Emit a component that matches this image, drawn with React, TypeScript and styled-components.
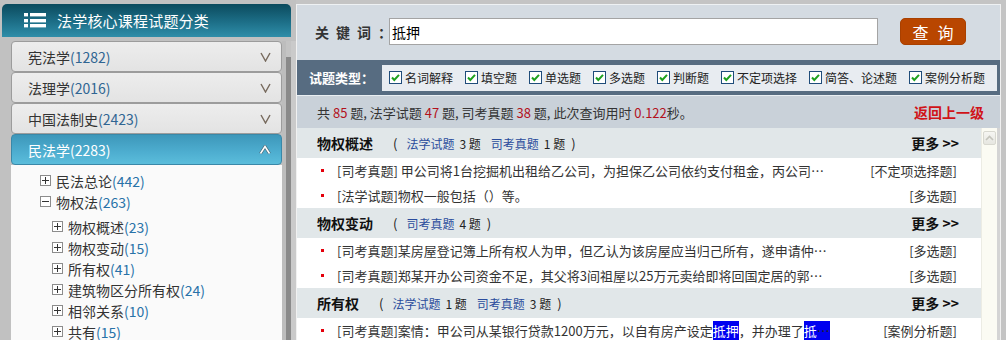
import React from "react";
import styled, { createGlobalStyle } from "styled-components";

const Global = createGlobalStyle`
  html, body { margin: 0; padding: 0; background: #c4c4c4; }
  body { font-family: "Noto Sans CJK SC", "Noto Sans", sans-serif; }
  #root { width: 1006px; height: 340px; overflow: hidden; }
  * { box-sizing: border-box; }
`;

const Page = styled.div`
  display: flex;
  width: 1006px;
  height: 340px;
  overflow: hidden;
  background: #c4c4c4;
`;

/* ---------- left panel ---------- */
const LeftPanel = styled.div`
  width: 296px;
  flex: none;
  display: flex;
  flex-direction: column;
  background: #c1c1c1;
`;

const SideHeader = styled.div`
  margin: 4px 5px 0 2px;
  height: 33px;
  flex: none;
  border-radius: 5px 5px 0 0;
  background: linear-gradient(#0b4a5d, #1d6f88 55%, #2f8ea9);
  display: flex;
  align-items: center;
  padding-left: 22px;
  gap: 11px;
  color: #fff;
  font-size: 15px;
  letter-spacing: 0.2px;
`;

const SideBody = styled.div`
  flex: 1;
  min-height: 0;
  display: flex;
  margin-top: 4px;
  padding-left: 11px;
`;

const AccordionCol = styled.div`
  width: 271px;
  display: flex;
  flex-direction: column;
`;

const AccItem = styled.div<{ $active?: boolean }>`
  height: 31px;
  flex: none;
  border: 1px solid ${(p) => (p.$active ? "#3a88a8" : "#9c9c9c")};
  border-radius: 4px;
  background: ${(p) =>
    p.$active
      ? "linear-gradient(#3d97ba, #4eaed0 60%, #5bbddb)"
      : "linear-gradient(#ededed, #e3e3e3)"};
  display: flex;
  align-items: center;
  justify-content: space-between;
  padding: 0 10px 0 16px;
  font-size: 14px;
  color: ${(p) => (p.$active ? "#fff" : "#333")};
`;

const AccCount = styled.span<{ $active?: boolean }>`
  color: ${(p) => (p.$active ? "#fff" : "#2f6592")};
`;

const TreeWrap = styled.div`
  flex: 1;
  background: #fafafa;
  padding: 5px 0 0 29px;
  overflow: hidden;
`;

const TreeRow = styled.div<{ $level: number }>`
  height: 21px;
  display: flex;
  align-items: center;
  padding-left: ${(p) => p.$level * 12}px;
  font-size: 14px;
  color: #333;
  white-space: nowrap;
`;

const TreeCount = styled.span`
  color: #2872a8;
`;

const ToggleBox = styled.span`
  width: 11px;
  height: 11px;
  flex: none;
  border: 1px solid #8c8c8c;
  background: #fff;
  margin-right: 5px;
  display: flex;
  align-items: center;
  justify-content: center;
`;

const ChildGroup = styled.div`
  margin-top: 4px;
`;

const ScrollStrip = styled.div`
  width: 14px;
  flex: none;
  display: flex;
  background: linear-gradient(90deg, #bdbdbd 0 4px, #c4c4c4 4px 9px, #cacaca 9px);
`;

const StripThumb = styled.div`
  margin: 16px 0 0 4px;
  width: 5px;
  background: #8a8a8a;
`;

/* ---------- right panel ---------- */
const RightPanel = styled.div`
  width: 705px;
  flex: none;
  margin-top: 4px;
  border-top: 1px solid #eef1f3;
  border-left: 1px solid #f1f1f1;
  border-right: 1px solid #f0f0f0;
  display: flex;
  flex-direction: column;
  background: #d4dbe2;
`;

const SearchBar = styled.div`
  height: 55px;
  flex: none;
  display: flex;
  align-items: flex-start;
  padding: 13px 0 0 18px;
  background: #d4dbe2;
`;

const KeyLabel = styled.label`
  width: 74px;
  height: 27px;
  display: flex;
  align-items: center;
  font-size: 14px;
  font-weight: bold;
  color: #333;
  white-space: nowrap;
`;

const Spaced = styled.span`
  letter-spacing: 7px;
`;

const KeyInput = styled.input`
  width: 489px;
  height: 27px;
  border: 1px solid #a4a4a4;
  background: #fff;
  padding: 0 2px;
  font-family: "Noto Sans CJK SC", sans-serif;
  font-size: 14px;
  color: #000;
  outline: none;
`;

const SearchBtn = styled.button`
  margin-left: 22px;
  width: 66px;
  height: 27px;
  border: 1px solid #a94000;
  border-radius: 5px;
  background: #b94600;
  color: #fff;
  font-family: "Noto Sans CJK SC", sans-serif;
  font-size: 16px;
  letter-spacing: 9px;
  padding: 0 0 0 9px;
  cursor: pointer;
`;

const TypeRow = styled.div`
  height: 35px;
  flex: none;
  display: flex;
  align-items: center;
  padding-left: 12px;
  background: #576c81;
`;

const TypeLabel = styled.span`
  width: 73px;
  flex: none;
  color: #fff;
  font-weight: bold;
  font-size: 13px;
  white-space: nowrap;
`;

const TypeBox = styled.div`
  flex: 1;
  height: 26px;
  margin: 0 5px 0 0;
  background: #e8ecf1;
  display: flex;
  align-items: center;
  padding-left: 7px;
`;

const Check = styled.label`
  display: flex;
  align-items: center;
  gap: 3px;
  margin-right: 12px;
  font-size: 12px;
  color: #222;
  white-space: nowrap;
`;

const StatsRow = styled.div`
  height: 33px;
  flex: none;
  border-top: 1px solid #e9eef2;
  background: #c9d1d9;
  display: flex;
  align-items: center;
  justify-content: space-between;
  padding: 0 16px 0 20px;
  font-size: 13px;
  color: #333;
`;

const Num = styled.span`
  color: #b3111c;
`;

const BackLink = styled.a`
  color: #d01318;
  font-weight: bold;
  font-size: 14px;
  text-decoration: none;
`;

const ContentArea = styled.div`
  flex: 1;
  min-height: 0;
  display: flex;
  background: #d4d4d4;
`;

const List = styled.div`
  flex: 1;
  background: #fff;
  overflow: hidden;
`;

const VScroll = styled.div`
  width: 16px;
  flex: none;
  margin-right: 3px;
  background: #fbfbf3;
  border-left: 1px solid #ecece4;
  padding: 3px 1px 0 1px;
`;

const ScrollUp = styled.div`
  height: 14px;
  border: 1px solid #d8d8d0;
  border-radius: 2px;
  background: linear-gradient(#f6f6f2, #e6e6e0);
  display: flex;
  align-items: center;
  justify-content: center;
`;

const SectionHead = styled.div`
  height: 30px;
  background: #e1e7e9;
  display: flex;
  align-items: center;
  padding: 0 22px 0 20px;
  white-space: nowrap;
`;

const SectionTitle = styled.span`
  font-size: 14px;
  font-weight: bold;
  color: #111;
`;

const SectionSub = styled.span`
  margin-left: 20px;
  font-size: 12px;
  color: #222;
`;

const Paren = styled.span<{ $side: "l" | "r" }>`
  font-size: 13px;
  ${(p) => (p.$side === "l" ? "margin-right: 9px;" : "margin-left: 6px;")}
`;

const SubLink = styled.a`
  color: #2a4c9c;
  text-decoration: none;
`;

const SubCount = styled.span<{ $gap?: boolean }>`
  margin-left: 5px;
  margin-right: ${(p) => (p.$gap ? "10px" : "0")};
`;

const More = styled.a`
  margin-left: auto;
  font-size: 14px;
  font-weight: bold;
  color: #111;
  text-decoration: none;
`;

const ItemRow = styled.div`
  height: 25px;
  display: flex;
  align-items: center;
  padding: 0 24px 0 24px;
  font-size: 13px;
  color: #333;
  white-space: nowrap;
`;

const Bullet = styled.span`
  width: 3px;
  height: 3px;
  flex: none;
  background: #e4000b;
  margin-right: 13px;
`;

const ItemText = styled.span`
  flex: 1;
  overflow: hidden;
`;

const ItemTag = styled.span`
  flex: none;
  margin-left: 12px;
`;

const Hl = styled.span<{ $dim?: boolean }>`
  background: #0000f0;
  color: ${(p) => (p.$dim ? "#222" : "#fff")};
`;

/* ---------- small drawings ---------- */
const ListIcon = () => (
  <svg width="22" height="15" viewBox="0 0 22 15">
    {[0, 6, 11].map((y) => (
      <g key={y} fill="#fff">
        <rect x="0" y={y} width="4" height="3.4" />
        <rect x="6" y={y} width="16" height="3.4" />
      </g>
    ))}
  </svg>
);

const Chevron = ({ up }: { up?: boolean }) =>
  up ? (
    <svg width="12" height="10" viewBox="0 0 12 10">
      <polyline points="1.5,8.5 6,1.5 10.5,8.5" fill="none" stroke="#4a6a78" strokeWidth="3" />
      <polyline points="1.5,8.5 6,1.5 10.5,8.5" fill="none" stroke="#fff" strokeWidth="1.5" />
    </svg>
  ) : (
    <svg width="11" height="10" viewBox="0 0 11 10">
      <polyline points="1,1 5.5,9 10,1" fill="none" stroke="#76695c" strokeWidth="1.4" />
    </svg>
  );

const PlusMinus = ({ minus }: { minus?: boolean }) => (
  <svg width="9" height="9" viewBox="0 0 9 9">
    <rect x="1" y="4" width="7" height="1" fill="#333" />
    {!minus && <rect x="4" y="1" width="1" height="7" fill="#333" />}
  </svg>
);

const CheckBox = () => (
  <svg width="13" height="13" viewBox="0 0 13 13">
    <rect x="0.5" y="0.5" width="12" height="12" fill="#fff" stroke="#1f4c7a" />
    <polyline points="3,6.5 5.3,9 10,3.8" fill="none" stroke="#1ea11e" strokeWidth="2" />
  </svg>
);

/* ---------- data ---------- */
const subjects = [
  { name: "宪法学", count: 1282 },
  { name: "法理学", count: 2016 },
  { name: "中国法制史", count: 2423 },
  { name: "民法学", count: 2283, active: true },
];

const children = [
  ["物权概述", 23],
  ["物权变动", 15],
  ["所有权", 41],
  ["建筑物区分所有权", 24],
  ["相邻关系", 10],
  ["共有", 15],
] as const;

const types = ["名词解释", "填空题", "单选题", "多选题", "判断题", "不定项选择", "简答、论述题", "案例分析题"];

type Item = { text: React.ReactNode; tag: string };
type Section = { title: string; fx?: number; sk?: number; items: Item[] };

const sections: Section[] = [
  {
    title: "物权概述",
    fx: 3,
    sk: 1,
    items: [
      { text: "[司考真题] 甲公司将1台挖掘机出租给乙公司，为担保乙公司依约支付租金，丙公司…", tag: "[不定项选择题]" },
      { text: "[法学试题]物权一般包括（）等。", tag: "[多选题]" },
    ],
  },
  {
    title: "物权变动",
    sk: 4,
    items: [
      { text: "[司考真题]某房屋登记簿上所有权人为甲，但乙认为该房屋应当归己所有，遂申请仲…", tag: "[多选题]" },
      { text: "[司考真题]郑某开办公司资金不足，其父将3间祖屋以25万元卖给即将回国定居的郭…", tag: "[多选题]" },
    ],
  },
  {
    title: "所有权",
    fx: 1,
    sk: 3,
    items: [
      {
        text: (
          <>
            [司考真题]案情：甲公司从某银行贷款1200万元，以自有房产设定<Hl>抵押</Hl>，并办理了<Hl>抵</Hl>
            <Hl $dim>…</Hl>
          </>
        ),
        tag: "[案例分析题]",
      },
    ],
  },
];

export default function App() {
  return (
    <>
      <Global />
      <Page>
        <LeftPanel>
          <SideHeader>
            <ListIcon />
            <span>法学核心课程试题分类</span>
          </SideHeader>
          <SideBody>
            <AccordionCol>
              {subjects.map((s) => (
                <AccItem key={s.name} $active={s.active}>
                  <span>
                    {s.name}
                    <AccCount $active={s.active}>({s.count})</AccCount>
                  </span>
                  <Chevron up={s.active} />
                </AccItem>
              ))}
              <TreeWrap>
                <TreeRow $level={0}>
                  <ToggleBox><PlusMinus /></ToggleBox>
                  民法总论<TreeCount>(442)</TreeCount>
                </TreeRow>
                <TreeRow $level={0}>
                  <ToggleBox><PlusMinus minus /></ToggleBox>
                  物权法<TreeCount>(263)</TreeCount>
                </TreeRow>
                <ChildGroup>
                  {children.map(([n, c]) => (
                    <TreeRow key={n} $level={1}>
                      <ToggleBox><PlusMinus /></ToggleBox>
                      {n}<TreeCount>({c})</TreeCount>
                    </TreeRow>
                  ))}
                </ChildGroup>
              </TreeWrap>
            </AccordionCol>
            <ScrollStrip>
              <StripThumb />
            </ScrollStrip>
          </SideBody>
        </LeftPanel>

        <RightPanel>
          <SearchBar>
            <KeyLabel>
              <Spaced>关键词</Spaced>：
            </KeyLabel>
            <KeyInput defaultValue="抵押" />
            <SearchBtn>查询</SearchBtn>
          </SearchBar>

          <TypeRow>
            <TypeLabel>试题类型：</TypeLabel>
            <TypeBox>
              {types.map((t) => (
                <Check key={t}>
                  <CheckBox />
                  {t}
                </Check>
              ))}
            </TypeBox>
          </TypeRow>

          <StatsRow>
            <span>
              共 <Num>85</Num> 题, 法学试题 <Num>47</Num> 题, 司考真题 <Num>38</Num> 题, 此次查询用时 <Num>0.122</Num>秒。
            </span>
            <BackLink href="#">返回上一级</BackLink>
          </StatsRow>

          <ContentArea>
            <List>
              {sections.map((sec) => (
                <div key={sec.title}>
                  <SectionHead>
                    <SectionTitle>{sec.title}</SectionTitle>
                    <SectionSub>
                      <Paren $side="l">(</Paren>
                      {sec.fx !== undefined && (
                        <>
                          <SubLink href="#">法学试题</SubLink>
                          <SubCount $gap>{sec.fx} 题</SubCount>
                        </>
                      )}
                      <SubLink href="#">司考真题</SubLink>
                      <SubCount>{sec.sk} 题</SubCount>
                      <Paren $side="r">)</Paren>
                    </SectionSub>
                    <More href="#">更多 &gt;&gt;</More>
                  </SectionHead>
                  {sec.items.map((it, i) => (
                    <ItemRow key={i}>
                      <Bullet />
                      <ItemText>{it.text}</ItemText>
                      <ItemTag>{it.tag}</ItemTag>
                    </ItemRow>
                  ))}
                </div>
              ))}
            </List>
            <VScroll>
              <ScrollUp>
                <svg width="9" height="6" viewBox="0 0 9 6">
                  <polyline points="1,5 4.5,1.5 8,5" fill="none" stroke="#c4c4bc" strokeWidth="1.6" />
                </svg>
              </ScrollUp>
            </VScroll>
          </ContentArea>
        </RightPanel>
      </Page>
    </>
  );
}
